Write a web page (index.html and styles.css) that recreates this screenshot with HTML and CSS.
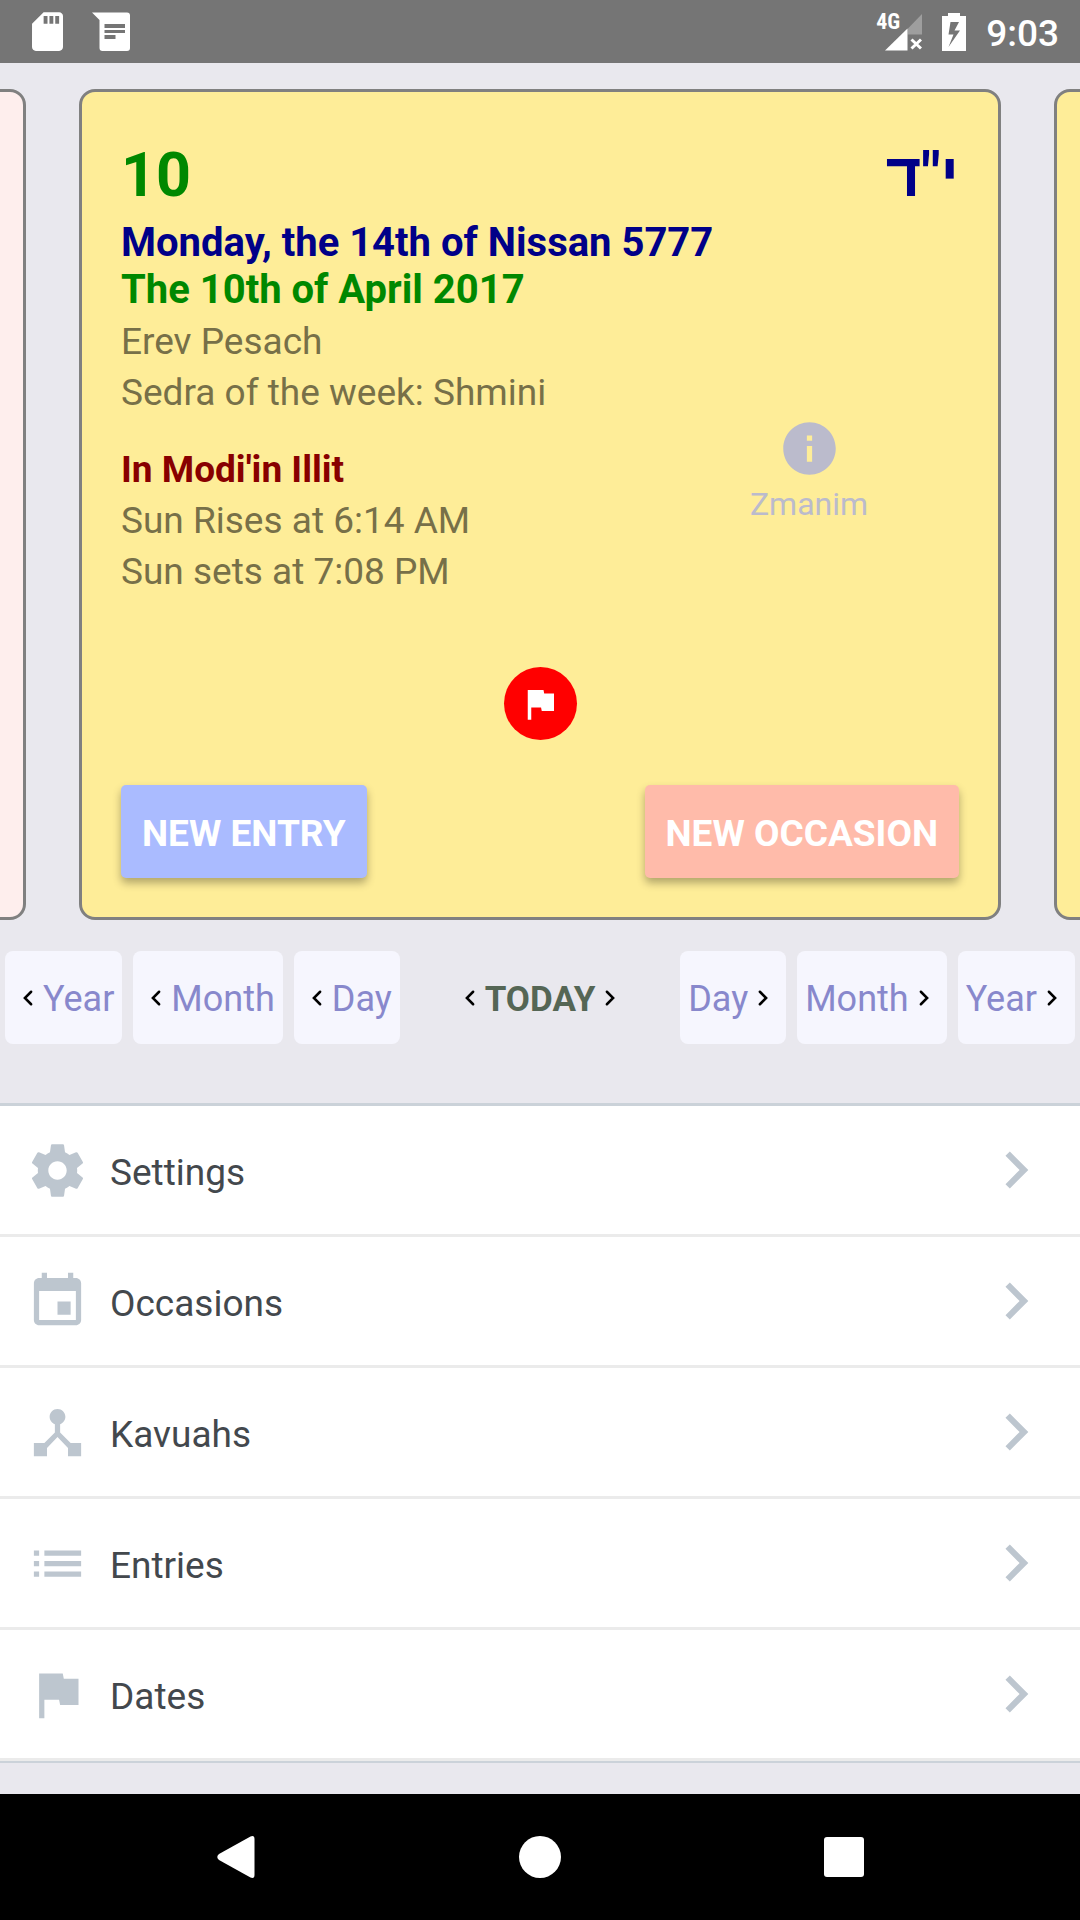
FILE: index.html
```html
<!DOCTYPE html>
<html lang="en">
<head>
<meta charset="utf-8">
<meta name="viewport" content="width=device-width, initial-scale=1">
<title>Monday, the 14th of Nissan 5777</title>
<link rel="stylesheet" href="styles.css">
</head>
<body>
<header class="status-bar">
  <div class="status-group">
    <svg class="status-sd" viewBox="4 2 16 20" aria-hidden="true"><path d="M18 2h-8L4.02 8 4 20c0 1.1.9 2 2 2h12c1.1 0 2-.9 2-2V4c0-1.1-.9-2-2-2zm-6 6h-2V4h2v4zm3 0h-2V4h2v4zm3 0h-2V4h2v4z"/></svg>
    <svg class="status-message" viewBox="0 0 38 39" aria-hidden="true"><path fill-rule="evenodd" d="M0 0.500H35Q38 0.500 38 3.500V36Q38 39 35 39H10.500Q7.500 39 7.500 36V8zM12.500 12V16H33V12zM12.500 18V21H33V18zM12.500 23V27H23.500V23z"/></svg>
  </div>
  <div class="status-group status-right">
    <div class="signal">
      <svg class="signal-icon" viewBox="0 0 46 39" aria-hidden="true">
        <path d="M46 2V22.500H31.500V17z" opacity=".3"/>
        <path d="M9 38.500L31.500 16.500V38.500z"/>
        <path d="M35.500 27.500L45 36.500M45 27.500L35.500 36.500" class="signal-cross"/>
      </svg>
      <span class="signal-type">4G</span>
    </div>
    <svg class="status-battery" viewBox="0 0 24 38" aria-hidden="true"><path fill-rule="evenodd" d="M6 0H18V3H24V38H0V3H6zM8.500 9L6.500 21.500H11.500L6.500 34L18 17.500H12.500L17 9z"/></svg>
    <time class="clock">9:03</time>
  </div>
</header>

<main class="content">
  <section class="carousel">
    <div class="card card-previous"></div>
    <article class="card">
      <div class="day-numbers">
        <span class="civil">10</span>
        <span class="jewish hebrew" lang="he" dir="rtl">י"ד</span>
      </div>
      <h1 class="date-line jewish">Monday, the 14th of Nissan 5777</h1>
      <h2 class="date-line civil">The 10th of April 2017</h2>
      <div class="details">
        <div class="day-info">
          <p>Erev Pesach</p>
          <p>Sedra of the week: Shmini</p>
          <h3 class="location">In Modi'in Illit</h3>
          <p>Sun Rises at 6:14 AM</p>
          <p>Sun sets at 7:08 PM</p>
        </div>
        <button class="zmanim" type="button">
          <svg class="icon" viewBox="0 0 24 24" aria-hidden="true"><path d="M12 2C6.480 2 2 6.480 2 12s4.480 10 10 10 10-4.480 10-10S17.520 2 12 2zm1 15h-2v-6h2v6zm0-8h-2V7h2v2z"/></svg>
          Zmanim
        </button>
      </div>
      <button class="flag-button" type="button" aria-label="Flagged date">
        <svg viewBox="0 0 24 24" aria-hidden="true"><path d="M14.400 6L14 4H5v17h2v-7h5.600l.4 2h7V6z"/></svg>
      </button>
      <div class="actions">
        <button class="action new-entry" type="button">NEW ENTRY</button>
        <button class="action new-occasion" type="button">NEW OCCASION</button>
      </div>
    </article>
    <div class="card"></div>
  </section>

  <nav class="date-nav" aria-label="Change date">
    <div class="nav-group">
      <button class="step" type="button"><svg viewBox="0 0 24 24" aria-hidden="true"><path d="M14.500 7L9.500 12L14.500 17"/></svg><span>Year</span></button>
      <button class="step" type="button"><svg viewBox="0 0 24 24" aria-hidden="true"><path d="M14.500 7L9.500 12L14.500 17"/></svg><span>Month</span></button>
      <button class="step" type="button"><svg viewBox="0 0 24 24" aria-hidden="true"><path d="M14.500 7L9.500 12L14.500 17"/></svg><span>Day</span></button>
    </div>
    <button class="step today" type="button"><svg viewBox="0 0 24 24" aria-hidden="true"><path d="M14.500 7L9.500 12L14.500 17"/></svg><span>TODAY</span><svg viewBox="0 0 24 24" aria-hidden="true"><path d="M9.500 7L14.500 12L9.500 17"/></svg></button>
    <div class="nav-group">
      <button class="step" type="button"><span>Day</span><svg viewBox="0 0 24 24" aria-hidden="true"><path d="M9.500 7L14.500 12L9.500 17"/></svg></button>
      <button class="step" type="button"><span>Month</span><svg viewBox="0 0 24 24" aria-hidden="true"><path d="M9.500 7L14.500 12L9.500 17"/></svg></button>
      <button class="step" type="button"><span>Year</span><svg viewBox="0 0 24 24" aria-hidden="true"><path d="M9.500 7L14.500 12L9.500 17"/></svg></button>
    </div>
  </nav>

  <ul class="menu">
    <li><a class="menu-item" href="#settings">
      <svg class="icon" viewBox="0 0 24 24" aria-hidden="true"><path d="M19.430 12.980c.04-.32.07-.64.07-.98s-.03-.66-.07-.98l2.110-1.650c.19-.15.24-.42.12-.64l-2-3.460c-.12-.22-.39-.3-.61-.22l-2.490 1c-.52-.4-1.080-.73-1.690-.98l-.38-2.650C14.460 2.180 14.250 2 14 2h-4c-.25 0-.46.18-.49.42l-.38 2.650c-.61.25-1.170.59-1.690.98l-2.490-1c-.23-.09-.49 0-.61.22l-2 3.460c-.13.22-.07.49.12.64l2.110 1.650c-.04.32-.07.65-.07.98s.03.66.07.98l-2.110 1.650c-.19.15-.24.42-.12.64l2 3.460c.12.22.39.3.61.22l2.490-1c.52.4 1.080.73 1.690.98l.38 2.650c.03.24.24.42.49.42h4c.25 0 .46-.18.49-.42l.38-2.650c.61-.25 1.170-.59 1.690-.98l2.490 1c.23.09.49 0 .61-.22l2-3.460c.12-.22.07-.49-.12-.64l-2.110-1.650zM12 15.500c-1.930 0-3.500-1.570-3.500-3.500s1.570-3.500 3.500-3.500 3.500 1.570 3.500 3.500-1.570 3.500-3.500 3.500z"/></svg>
      <span class="menu-label">Settings</span>
      <svg class="chevron" viewBox="0 0 24 24" aria-hidden="true"><path d="M10 6L8.590 7.410 13.170 12l-4.580 4.590L10 18l6-6z"/></svg>
    </a></li>
    <li><a class="menu-item" href="#occasions">
      <svg class="icon" viewBox="0 0 24 24" aria-hidden="true"><path d="M17 12h-5v5h5v-5zM16 1v2H8V1H6v2H5c-1.110 0-1.990.9-1.990 2L3 19c0 1.100.89 2 2 2h14c1.100 0 2-.9 2-2V5c0-1.100-.9-2-2-2h-1V1h-2zm3 18H5V8h14v11z"/></svg>
      <span class="menu-label">Occasions</span>
      <svg class="chevron" viewBox="0 0 24 24" aria-hidden="true"><path d="M10 6L8.590 7.410 13.170 12l-4.580 4.590L10 18l6-6z"/></svg>
    </a></li>
    <li><a class="menu-item" href="#kavuahs">
      <svg class="icon" viewBox="0 0 24 24" aria-hidden="true"><path d="M17 16l-4-4V8.820C14.160 8.400 15 7.300 15 6c0-1.660-1.340-3-3-3S9 4.340 9 6c0 1.300.84 2.400 2 2.820V12l-4 4H3v5h5v-3.050l4-4.200 4 4.200V21h5v-5h-4z"/></svg>
      <span class="menu-label">Kavuahs</span>
      <svg class="chevron" viewBox="0 0 24 24" aria-hidden="true"><path d="M10 6L8.590 7.410 13.170 12l-4.580 4.590L10 18l6-6z"/></svg>
    </a></li>
    <li><a class="menu-item" href="#entries">
      <svg class="icon" viewBox="0 0 24 24" aria-hidden="true"><path d="M3 13h2v-2H3v2zm0 4h2v-2H3v2zm0-8h2V7H3v2zm4 4h14v-2H7v2zm0 4h14v-2H7v2zM7 7v2h14V7H7z"/></svg>
      <span class="menu-label">Entries</span>
      <svg class="chevron" viewBox="0 0 24 24" aria-hidden="true"><path d="M10 6L8.590 7.410 13.170 12l-4.580 4.590L10 18l6-6z"/></svg>
    </a></li>
    <li><a class="menu-item" href="#dates">
      <svg class="icon" viewBox="0 0 24 24" aria-hidden="true"><path d="M14.400 6L14 4H5v17h2v-7h5.600l.4 2h7V6z"/></svg>
      <span class="menu-label">Dates</span>
      <svg class="chevron" viewBox="0 0 24 24" aria-hidden="true"><path d="M10 6L8.590 7.410 13.170 12l-4.580 4.590L10 18l6-6z"/></svg>
    </a></li>
  </ul>
</main>

<footer class="system-nav">
  <button type="button" aria-label="Back"><svg viewBox="0 0 42 42" aria-hidden="true"><path d="M4 18Q0.500 21 4 24L35.500 41.500Q39.500 43 39.500 39V3Q39.500 -1 35.500 0.500z"/></svg></button>
  <button type="button" aria-label="Home"><svg viewBox="0 0 42 42" aria-hidden="true"><circle cx="21" cy="21" r="21"/></svg></button>
  <button type="button" aria-label="Recent apps"><svg viewBox="0 0 42 42" aria-hidden="true"><rect x="1" y="1" width="40" height="40" rx="3"/></svg></button>
</footer>
</body>
</html>
```
FILE: styles.css
```css
* {
  box-sizing: border-box;
  margin: 0;
  padding: 0;
}

body {
  display: flex;
  flex-direction: column;
  min-height: 100vh;
  background: #e9e8ee;
  font-family: Roboto, "Open Sans", sans-serif;
  font-size: 37px;
  line-height: 51px;
  overflow-x: hidden;
}

button {
  border: 0;
  background: none;
  color: inherit;
  font: inherit;
  cursor: pointer;
}

svg {
  display: block;
  flex: none;
  fill: currentColor;
}

.icon {
  width: 63px;
  height: 63px;
}

/* Status bar */
.status-bar {
  display: flex;
  justify-content: space-between;
  align-items: center;
  height: 63px;
  padding: 0 21px 0 32px;
  background: #757575;
  color: #fff;
}

.status-group {
  display: flex;
  align-items: center;
  gap: 29px;
}

.status-right {
  gap: 20px;
}

.status-sd {
  width: 31px;
  height: 39px;
}

.status-message {
  width: 38px;
  height: 39px;
}

.signal {
  position: relative;
}

.signal-icon {
  width: 46px;
  height: 39px;
}

.signal-cross {
  fill: none;
  stroke: currentColor;
  stroke-width: 3;
}

.signal-type {
  position: absolute;
  left: 0;
  top: 0;
  font-family: "Roboto Condensed", "Liberation Sans Narrow", Roboto, sans-serif;
  font-size: 22px;
  font-weight: 700;
  line-height: 20px;
}

.status-battery {
  width: 24px;
  height: 38px;
}

.clock {
  padding-top: 3px;
  font-weight: 500;
}

/* Day cards */
.carousel {
  display: flex;
  justify-content: center;
  gap: 53px;
  padding-top: 26px;
  overflow: hidden;
}

.card {
  flex: 0 0 calc(100% - 158px);
  padding: 43px 39px 39px;
  border: 3px solid #808080;
  border-radius: 16px;
  background: #feed98;
}

.card-previous {
  background: #feeeed;
}

.civil {
  color: #008800;
}

.jewish {
  color: #000088;
}

.day-numbers {
  display: flex;
  justify-content: space-between;
  margin-bottom: 4px;
  font-size: 61px;
  font-weight: 700;
  line-height: 80px;
}

.hebrew {
  font-family: Roboto, "Liberation Sans", sans-serif;
}

.date-line {
  font-size: 40px;
  font-weight: 700;
  line-height: 47px;
}

.details {
  display: flex;
  justify-content: space-between;
  align-items: flex-start;
  margin-top: 3px;
  color: #777048;
}

.location {
  margin-top: 26px;
  color: #880000;
  font-size: 37px;
}

.zmanim {
  display: flex;
  flex-direction: column;
  align-items: center;
  gap: 5px;
  width: 300px;
  margin-top: 101px;
  color: #bbbbcc;
  font-size: 32px;
  line-height: 38px;
}

.flag-button {
  display: grid;
  place-items: center;
  width: 73px;
  height: 73px;
  margin: 70px auto 45px;
  border-radius: 50%;
  background: #ff0000;
  color: #fff;
}

.flag-button svg {
  width: 42px;
  height: 42px;
}

.actions {
  display: flex;
  justify-content: space-between;
}

.action {
  height: 93px;
  padding: 3px 21px 0;
  border-radius: 5px;
  color: #fff;
  font-weight: 700;
  box-shadow: 0 5px 9px rgba(0, 0, 0, 0.3);
}

.new-entry {
  background: #aabbff;
}

.new-occasion {
  background: #ffbbaa;
}

/* Date stepping */
.date-nav {
  display: flex;
  justify-content: space-between;
  padding: 31px 5px 59px;
}

.nav-group {
  display: flex;
  gap: 11px;
}

.step {
  display: flex;
  align-items: center;
  height: 93px;
  padding: 0 8px;
  border-radius: 8px;
  background: #f6f6fe;
  color: #8888cc;
  font-size: 36px;
}

.step span {
  padding-top: 4px;
}

.step svg {
  width: 30px;
  height: 30px;
  fill: none;
  stroke: #000;
  stroke-width: 2;
  stroke-linecap: round;
}

.today {
  background: none;
  color: #556655;
  font-size: 35px;
  font-weight: 700;
}

/* Menu */
.menu {
  border-top: 3px solid #cbd2d9;
  border-bottom: 2px solid #cbd2d9;
  background: #fff;
  list-style: none;
}

.menu-item {
  display: flex;
  align-items: center;
  height: 131px;
  padding: 0 27px 0 26px;
  border-bottom: 3px solid #ebebeb;
  color: #bdc6cf;
  text-decoration: none;
}

.menu-label {
  flex: 1;
  padding: 5px 0 0 21px;
  color: #43484d;
}

.chevron {
  width: 74px;
  height: 74px;
}

/* System navigation */
.system-nav {
  display: flex;
  margin-top: auto;
  padding: 0 84px;
  background: #000;
  color: #fff;
}

.system-nav button {
  display: grid;
  flex: 1;
  place-items: center;
  height: 126px;
}

.system-nav svg {
  width: 42px;
  height: 42px;
}
```
